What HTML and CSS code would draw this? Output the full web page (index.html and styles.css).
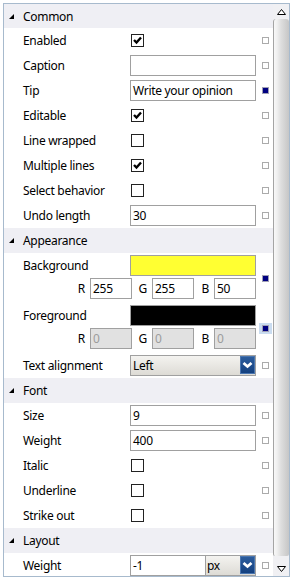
FILE: index.html
```html
<!DOCTYPE html>
<html>
<head>
<meta charset="utf-8">
<link rel="stylesheet" href="styles.css">
</head>
<body>
<div class="frame">
  <div class="content">
    <div class="cat first"><svg class="tri" viewBox="0 0 5 5"><polygon points="0,5 5,5 5,0"/></svg>Common</div>
    <div class="row"><span class="label">Enabled</span><span class="val"><span class="cb"><svg viewBox="0 0 11 11"><polyline points="2,5 4.5,7.5 9,2.5"/></svg></span></span><span class="mkc"><span class="mk"></span></span></div>
    <div class="row"><span class="label">Caption</span><span class="val"><span class="inp"></span></span><span class="mkc"><span class="mk"></span></span></div>
    <div class="row"><span class="label">Tip</span><span class="val"><span class="inp">Write your opinion</span></span><span class="mkc"><span class="mk on"></span></span></div>
    <div class="row"><span class="label">Editable</span><span class="val"><span class="cb"><svg viewBox="0 0 11 11"><polyline points="2,5 4.5,7.5 9,2.5"/></svg></span></span><span class="mkc"><span class="mk"></span></span></div>
    <div class="row"><span class="label">Line wrapped</span><span class="val"><span class="cb"></span></span><span class="mkc"><span class="mk"></span></span></div>
    <div class="row"><span class="label">Multiple lines</span><span class="val"><span class="cb"><svg viewBox="0 0 11 11"><polyline points="2,5 4.5,7.5 9,2.5"/></svg></span></span><span class="mkc"><span class="mk"></span></span></div>
    <div class="row"><span class="label">Select behavior</span><span class="val"><span class="cb"></span></span><span class="mkc"><span class="mk"></span></span></div>
    <div class="row"><span class="label">Undo length</span><span class="val"><span class="inp">30</span></span><span class="mkc"><span class="mk"></span></span></div>

    <div class="cat"><svg class="tri" viewBox="0 0 5 5"><polygon points="0,5 5,5 5,0"/></svg>Appearance</div>
    <div class="grp">
      <span class="label">Background</span>
      <span class="swatch yellow"></span>
      <span class="mkc span2"><span class="mk on"></span></span>
      <div class="rgb">
        <span class="rl">R</span><span class="inp small">255</span>
        <span class="rl">G</span><span class="inp small">255</span>
        <span class="rl">B</span><span class="inp small">50</span>
      </div>
    </div>
    <div class="grp">
      <span class="label">Foreground</span>
      <span class="swatch black"></span>
      <span class="mkc span2"><span class="hl"><span class="mk on"></span></span></span>
      <div class="rgb">
        <span class="rl">R</span><span class="inp small dis">0</span>
        <span class="rl">G</span><span class="inp small dis">0</span>
        <span class="rl">B</span><span class="inp small dis">0</span>
      </div>
    </div>
    <div class="row"><span class="label">Text alignment</span><span class="val"><span class="sel"><span class="stxt">Left</span><span class="sbtn"><svg viewBox="0 0 15 18"><polyline points="3.5,7 7.5,10.5 11.5,7"/></svg></span></span></span><span class="mkc"><span class="mk"></span></span></div>

    <div class="cat"><svg class="tri" viewBox="0 0 5 5"><polygon points="0,5 5,5 5,0"/></svg>Font</div>
    <div class="row"><span class="label">Size</span><span class="val"><span class="inp">9</span></span><span class="mkc"><span class="mk"></span></span></div>
    <div class="row"><span class="label">Weight</span><span class="val"><span class="inp">400</span></span><span class="mkc"><span class="mk"></span></span></div>
    <div class="row"><span class="label">Italic</span><span class="val"><span class="cb"></span></span><span class="mkc"><span class="mk"></span></span></div>
    <div class="row"><span class="label">Underline</span><span class="val"><span class="cb"></span></span><span class="mkc"><span class="mk"></span></span></div>
    <div class="row"><span class="label">Strike out</span><span class="val"><span class="cb"></span></span><span class="mkc"><span class="mk"></span></span></div>

    <div class="cat"><svg class="tri" viewBox="0 0 5 5"><polygon points="0,5 5,5 5,0"/></svg>Layout</div>
    <div class="row"><span class="label">Weight</span><span class="val pair"><span class="inp grow">-1</span><span class="sel unit"><span class="stxt">px</span><span class="sbtn"><svg viewBox="0 0 15 18"><polyline points="3.5,7 7.5,10.5 11.5,7"/></svg></span></span></span><span class="mkc"><span class="mk"></span></span></div>
  </div>
  <div class="scroll">
    <div class="arrow"><svg viewBox="0 0 9 6"><polygon points="0.5,5.5 4.5,0.5 8.5,5.5"/></svg></div>
    <div class="thumb"></div>
    <div class="arrow"><svg viewBox="0 0 9 6"><polygon points="0.5,0.5 4.5,5.5 8.5,0.5"/></svg></div>
  </div>
</div>
</body>
</html>
```

FILE: styles.css
```css
html, body {
  margin: 0;
  padding: 0;
  background: #fff;
}
body {
  font-family: "Noto Sans", "Open Sans", sans-serif;
  font-size: 12px;
  letter-spacing: -0.3px;
  color: #000;
}
.frame {
  margin: 3px;
  width: 285px;
  height: 572px;
  border: 1px solid #a7bacd;
  display: flex;
  overflow: hidden;
}
.content {
  width: 269px;
  flex: none;
  overflow: hidden;
  background: #fff;
}
.cat {
  height: 25px;
  display: flex;
  align-items: center;
  background: #efeff4;
  padding-left: 5px;
}
.cat.first {
  height: 24px;
}
.tri {
  width: 5px;
  height: 5px;
  margin-right: 9px;
  fill: #000;
}
.row {
  height: 25px;
  display: grid;
  grid-template-columns: 126px 126px 17px;
  align-items: center;
}
.label {
  padding-left: 19px;
  white-space: nowrap;
}
.val {
  display: flex;
  align-items: center;
}
.mkc {
  display: flex;
  align-items: center;
  padding-left: 6px;
}
.mk {
  width: 7px;
  height: 7px;
  box-sizing: border-box;
  border: 1px solid #ababab;
  background: #fff;
}
.mk.on {
  background: #000080;
  border-color: #a0a0b4;
}
.hl {
  display: flex;
  align-items: center;
  justify-content: center;
  width: 13px;
  height: 11px;
  margin-left: -3px;
  background: #cadcf0;
}
.cb {
  width: 13px;
  height: 13px;
  box-sizing: border-box;
  border: 1px solid #222;
  background: #fff;
  margin-left: 1px;
  display: flex;
}
.cb svg {
  width: 11px;
  height: 11px;
  fill: none;
  stroke: #000;
  stroke-width: 2.4;
}
.inp {
  box-sizing: border-box;
  width: 126px;
  height: 21px;
  border: 1px solid #a0a0a0;
  background: #fff;
  padding-left: 2px;
  display: flex;
  align-items: center;
  white-space: nowrap;
  overflow: hidden;
}
.inp.small {
  width: 42px;
}
.inp.dis {
  background: #e1e1e1;
  color: #9c9c9c;
}
.grp {
  height: 50px;
  display: grid;
  grid-template-columns: 126px 126px 17px;
  grid-template-rows: 25px 25px;
}
.grp .label {
  align-self: center;
}
.swatch {
  box-sizing: border-box;
  height: 21px;
  margin-top: 2px;
  border: 1px solid #a0a0a0;
}
.swatch.yellow {
  background: #ffff32;
}
.swatch.black {
  background: #000;
}
.span2 {
  grid-row: 1 / 3;
  grid-column: 3;
}
.rgb {
  grid-row: 2;
  grid-column: 1 / 3;
  justify-self: end;
  align-self: start;
  display: grid;
  grid-template-columns: 20px 42px 20px 42px 20px 42px;
}
.rgb .rl {
  display: flex;
  align-items: center;
  justify-content: flex-end;
  padding-right: 5px;
}
.sel {
  box-sizing: border-box;
  width: 126px;
  height: 21px;
  border: 1px solid #a0a0a0;
  background: linear-gradient(#f4f3f0, #dddbd5);
  display: flex;
}
.stxt {
  flex: 1;
  padding-left: 2px;
  display: flex;
  align-items: center;
}
.sbtn {
  width: 15px;
  height: 18px;
  background: linear-gradient(#2d5e9e, #123f7e);
  box-shadow: inset 0 0 0 1px #4a76b0;
  display: flex;
}
.sbtn svg {
  width: 15px;
  height: 18px;
  fill: none;
  stroke: #fff;
  stroke-width: 2.8;
}
.pair {
  display: flex;
}
.inp.grow {
  width: 76px;
}
.sel.unit {
  width: 50px;
  border-left: none;
}
.unit .stxt {
  padding-left: 1px;
}
.scroll {
  width: 16px;
  flex: none;
  background: #f0f0f3;
  display: flex;
  flex-direction: column;
}
.arrow {
  height: 15px;
  display: flex;
  align-items: center;
  justify-content: center;
}
.arrow svg {
  width: 9px;
  height: 6px;
  fill: #fff;
  stroke: #000;
  stroke-width: 1;
}
.thumb {
  flex: 1;
  margin-bottom: 5px;
  border-radius: 3px 3px 2px 2px;
  border-left: 1px solid #a4a4a4;
  background: linear-gradient(to right, #f8f8f8 0, #f0f0f0 3px, #dedede 7px, #cfcfcf 12px, #c6c6c6 100%);
}
```
